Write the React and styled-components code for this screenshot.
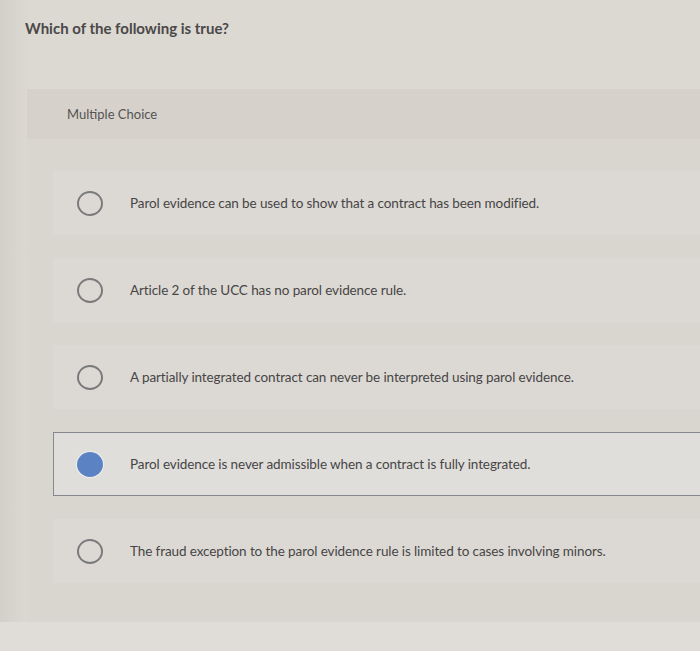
import React from "react";
import styled, { createGlobalStyle } from "styled-components";

const Global = createGlobalStyle`
  html, body { margin: 0; padding: 0; }
  body {
    width: 700px;
    height: 651px;
    overflow: hidden;
    background: linear-gradient(90deg, #d3cfc9 0px, #dcd8d2 30px, #dcd9d3 100%);
    font-family: Lato, "Open Sans", sans-serif;
    color: #4c4a4a;
  }
`;

const Page = styled.div`
  display: flex;
  flex-direction: column;
  height: 651px;
`;

const Title = styled.h1`
  margin: 0;
  padding: 19px 0 0 25px;
  height: 89px;
  box-sizing: border-box;
  font-size: 15px;
  font-weight: 700;
  color: #4a4848;
`;

const Panel = styled.section`
  margin-left: 27px;
  background: #d6d2cb;
  display: flex;
  flex-direction: column;
  height: 533px;
`;

const PanelHeader = styled.div`
  height: 50px;
  padding-left: 40px;
  display: flex;
  align-items: center;
  font-size: 13px;
  color: #555353;
`;

const Options = styled.div`
  flex: 1;
  background: #d9d6d0;
  padding: 32px 0 0 26px;
  display: flex;
  flex-direction: column;
  gap: 23px;
`;

const Row = styled.div`
  height: 64px;
  box-sizing: border-box;
  margin-right: -10px;
  display: flex;
  align-items: center;
  gap: 27px;
  padding-left: ${(p) => (p.$selected ? "23px" : "24px")};
  background: ${(p) => (p.$selected ? "#dfdedb" : "#dcd9d4")};
  border: ${(p) => (p.$selected ? "1.5px solid #868a90" : "none")};
`;

const Radio = styled.span`
  width: 26px;
  height: 25px;
  border-radius: 50%;
  box-sizing: border-box;
  flex: none;
  border: ${(p) => (p.$checked ? "none" : "2px solid #7a7a7c")};
  background: ${(p) => (p.$checked ? "#5b82c2" : "transparent")};
  box-shadow: ${(p) => (p.$checked ? "0 0 1px 1px rgba(255,255,255,0.5)" : "none")};
`;

const Label = styled.span`
  font-size: 13.5px;
  color: #474545;
  letter-spacing: -0.1px;
`;

const Bottom = styled.div`
  flex: 1;
  background: #e0ddd8;
`;

const options = [
  "Parol evidence can be used to show that a contract has been modified.",
  "Article 2 of the UCC has no parol evidence rule.",
  "A partially integrated contract can never be interpreted using parol evidence.",
  "Parol evidence is never admissible when a contract is fully integrated.",
  "The fraud exception to the parol evidence rule is limited to cases involving minors.",
];

export default function App() {
  const selected = 3;
  return (
    <>
      <Global />
      <Page>
        <Title>Which of the following is true?</Title>
        <Panel>
          <PanelHeader>Multiple Choice</PanelHeader>
          <Options>
            {options.map((o, i) => (
              <Row key={i} $selected={i === selected}>
                <Radio $checked={i === selected} />
                <Label>{o}</Label>
              </Row>
            ))}
          </Options>
        </Panel>
        <Bottom />
      </Page>
    </>
  );
}
